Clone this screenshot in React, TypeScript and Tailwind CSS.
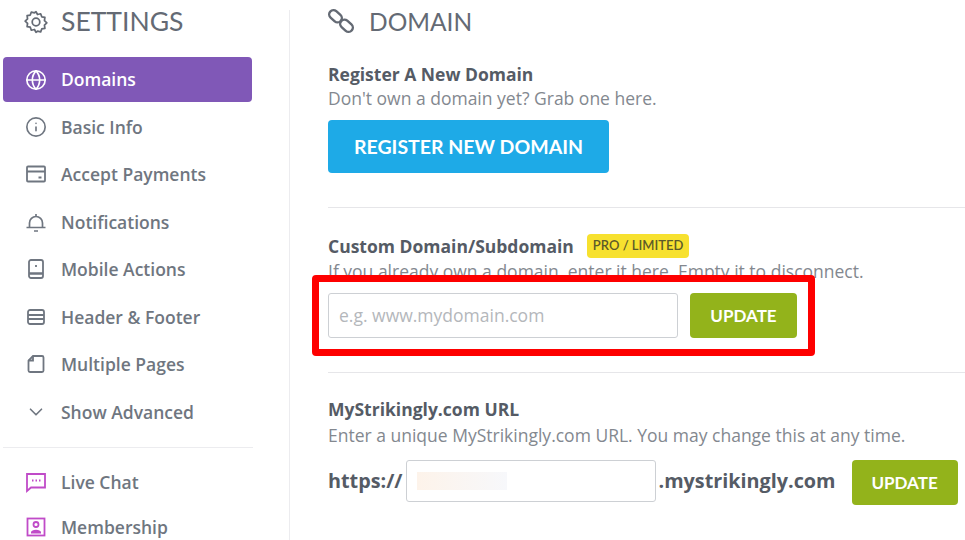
import { ChevronDown, Globe, Info } from "lucide-react";
import type { ReactNode } from "react";

const gearPath =
  "M12 2.5l1.4 2.6 2.9-.7 1 2.8 2.9.6-.4 3 2.2 2-2.2 2 .4 3-2.9.6-1 2.8-2.9-.7L12 21.5l-1.4-2.6-2.9.7-1-2.8-2.9-.6.4-3-2.2-2 2.2-2-.4-3 2.9-.6 1-2.8 2.9.7z";

type NavItem = { label: string; icon: ReactNode };

const iconClass = "w-[22px] h-[22px]";

const navItems: NavItem[] = [
  {
    label: "Basic Info",
    icon: <Info className={iconClass} strokeWidth={1.8} />,
  },
  {
    label: "Accept Payments",
    icon: (
      <svg viewBox="0 0 22 22" className={iconClass} fill="none" stroke="currentColor" strokeWidth="1.8">
        <rect x="2" y="3.5" width="18" height="15" rx="1" />
        <path d="M2 8.5h18M13.5 14.5h3" />
      </svg>
    ),
  },
  {
    label: "Notifications",
    icon: (
      <svg viewBox="0 0 22 22" className={iconClass} fill="none" stroke="currentColor" strokeWidth="1.7">
        <path d="M1.5 16.5h19M4.5 16.5V12a6.5 6.5 0 0 1 13 0v4.5M11 3v2.5M9 20h4" />
      </svg>
    ),
  },
  {
    label: "Mobile Actions",
    icon: (
      <svg viewBox="0 0 22 22" className={iconClass} fill="none" stroke="currentColor" strokeWidth="1.8">
        <rect x="4" y="2" width="14" height="18" rx="2" />
        <path d="M4 15.5h14" strokeWidth="2.5" />
        <path d="M11 7v2" />
      </svg>
    ),
  },
  {
    label: "Header & Footer",
    icon: (
      <svg viewBox="0 0 22 22" className={iconClass} fill="none" stroke="currentColor" strokeWidth="1.8">
        <rect x="3" y="4" width="16" height="14" rx="2" />
        <path d="M3 9h16M3 13h16" />
      </svg>
    ),
  },
  {
    label: "Multiple Pages",
    icon: (
      <svg viewBox="0 0 22 22" className={iconClass} fill="none" stroke="currentColor" strokeWidth="1.8">
        <path d="M8 3h9a1.5 1.5 0 0 1 1.5 1.5v13A1.5 1.5 0 0 1 17 19H5a1.5 1.5 0 0 1-1.5-1.5v-10z" />
        <path d="M8 3v4.5H3.5" />
      </svg>
    ),
  },
  {
    label: "Show Advanced",
    icon: <ChevronDown className={iconClass} strokeWidth={1.8} />,
  },
];

const NavRow = ({ label, icon }: NavItem) => (
  <div className="flex items-center h-[47.5px] pl-[25px] text-[#6f7680]">
    <span className="w-[22px] flex justify-center">{icon}</span>
    <span className="ml-[14px] text-[17.5px] font-semibold">{label}</span>
  </div>
);

const UpdateButton = ({ className }: { className: string }) => (
  <button
    className={`h-[45px] rounded bg-[#93b31b] text-white font-['Lato',sans-serif] font-bold text-[17px] ${className}`}
  >
    UPDATE
  </button>
);

export default function App() {
  return (
    <div className="relative w-[965px] h-[540px] overflow-hidden bg-white font-['Open_Sans',sans-serif] flex">
      {/* SIDEBAR */}
      <aside className="w-[290px] h-[530px] mt-[10px] border-r border-[#ececef] shrink-0">
        <div className="flex items-center h-[24px] pl-[23px] text-[#646a74]">
          <svg viewBox="0 0 24 24" className="w-[26px] h-[26px] shrink-0" fill="none" stroke="currentColor" strokeWidth="1.6" strokeLinejoin="round">
            <path d={gearPath} />
            <circle cx="12" cy="12" r="3.5" />
          </svg>
          <span className="ml-[12px] text-[26.5px] font-['Lato',sans-serif]">SETTINGS</span>
        </div>

        <div className="mt-[23px] ml-[3px] w-[249px] h-[45px] rounded bg-[#8058b7] text-white flex items-center pl-[22px]">
          <Globe className={iconClass} strokeWidth={1.8} />
          <span className="ml-[14px] text-[17.5px] font-semibold">Domains</span>
        </div>

        <div className="mt-[1px]">
          {navItems.map((item) => (
            <NavRow key={item.label} {...item} />
          ))}
        </div>

        <div className="mt-[11px] ml-[3px] w-[250px] border-t border-[#ececef]" />

        <div className="mt-[12px] flex items-center h-[45px] pl-[25px] text-[#6f7680]">
          <span className="w-[22px] flex justify-center">
            <svg viewBox="0 0 22 22" className={iconClass} fill="none" stroke="#c04bc8" strokeWidth="1.8">
              <path d="M2 3h18v13.5H6L2 20z" />
              <path d="M7 9.5h1.5M10.5 9.5H12M14 9.5h1.5" />
            </svg>
          </span>
          <span className="ml-[14px] text-[17.5px] font-semibold">Live Chat</span>
        </div>
        <div className="flex items-center h-[45px] pl-[25px] text-[#6f7680]">
          <span className="w-[22px] flex justify-center">
            <svg viewBox="0 0 22 22" className={iconClass} fill="none" stroke="#c04bc8" strokeWidth="1.8">
              <rect x="2.5" y="2.5" width="17" height="17" />
              <circle cx="11" cy="8.5" r="2.5" />
              <path d="M6 16.5h10M7 16.5c.5-2.5 7.5-2.5 8 0" />
            </svg>
          </span>
          <span className="ml-[14px] text-[17.5px] font-semibold">Membership</span>
        </div>
      </aside>

      {/* MAIN */}
      <main className="flex-1 pl-[38px] pt-[7px]">
        <div className="flex items-center h-[30px] text-[#646a74]">
          <svg viewBox="0 0 26 26" className="w-[26px] h-[26px] -mt-[2px]" fill="none" stroke="currentColor" strokeWidth="2.4">
            <rect x="0.5" y="4" width="14" height="8.5" rx="4.2" transform="rotate(42 7.5 8.25)" />
            <rect x="11.5" y="13.5" width="14" height="8.5" rx="4.2" transform="rotate(42 18.5 17.75)" />
          </svg>
          <span className="ml-[15px] text-[24.5px] font-['Lato',sans-serif]">DOMAIN</span>
        </div>

        <h3 className="mt-[25px] text-[17.5px] leading-[24px] font-bold text-[#555b65]">Register A New Domain</h3>
        <p className="text-[17.5px] leading-[25px] text-[#83888f]">Don't own a domain yet? Grab one here.</p>
        <button className="mt-[9px] w-[281px] h-[53px] rounded bg-[#1eaae7] text-white font-['Lato',sans-serif] font-bold text-[19.5px]">
          REGISTER NEW DOMAIN
        </button>

        <div className="mt-[34px] border-t border-[#e6e6e9]" />

        <div className="mt-[26px] flex items-center h-[24px]">
          <h3 className="text-[17.5px] font-bold text-[#555b65]">Custom Domain/Subdomain</h3>
          <span className="ml-[13px] h-[24px] px-[6px] flex items-center rounded-sm bg-[#f7e12f] text-[#5c5a2a] font-['Lato',sans-serif] font-semibold text-[13px]">
            PRO / LIMITED
          </span>
        </div>
        <p className="text-[17.5px] leading-[26px] text-[#83888f]">If you already own a domain, enter it here. Empty it to disconnect.</p>

        <div className="mt-[9px] flex gap-[12px]">
          <input
            placeholder="e.g. www.mydomain.com"
            className="w-[350px] h-[45px] rounded-[3px] border border-[#cdd0d4] pl-[10px] pr-[10px] pb-[2px] text-[17.5px] placeholder:text-[#b4b7bb] outline-none"
          />
          <UpdateButton className="w-[107px]" />
        </div>

        <div className="mt-[34px] border-t border-[#e6e6e9]" />

        <h3 className="mt-[24px] text-[17.5px] leading-[24px] font-bold text-[#555b65]">MyStrikingly.com URL</h3>
        <p className="mt-[1px] text-[17.5px] leading-[26px] text-[#83888f]">Enter a unique MyStrikingly.com URL. You may change this at any time.</p>

        <div className="mt-[12px] flex items-start text-[19.8px] font-bold text-[#555b65]">
          <span className="leading-[42px]">https://</span>
          <div className="ml-[3px] w-[250px] h-[42px] rounded-[3px] border border-[#cdd0d4] flex items-center pl-[10px]">
            <div className="w-[90px] h-[18px] bg-gradient-to-r from-[#fdf3ea] to-[#f7f8fb]" />
          </div>
          <span className="ml-[3px] leading-[42px]">.mystrikingly.com</span>
          <UpdateButton className="ml-[16px] w-[106px]" />
        </div>
      </main>

      {/* red highlight drawn over the screenshot */}
      <div className="absolute left-[312px] top-[275px] w-[503px] h-[81px] rounded-[4px] border-[7px] border-[#fe0000]" />
    </div>
  );
}
